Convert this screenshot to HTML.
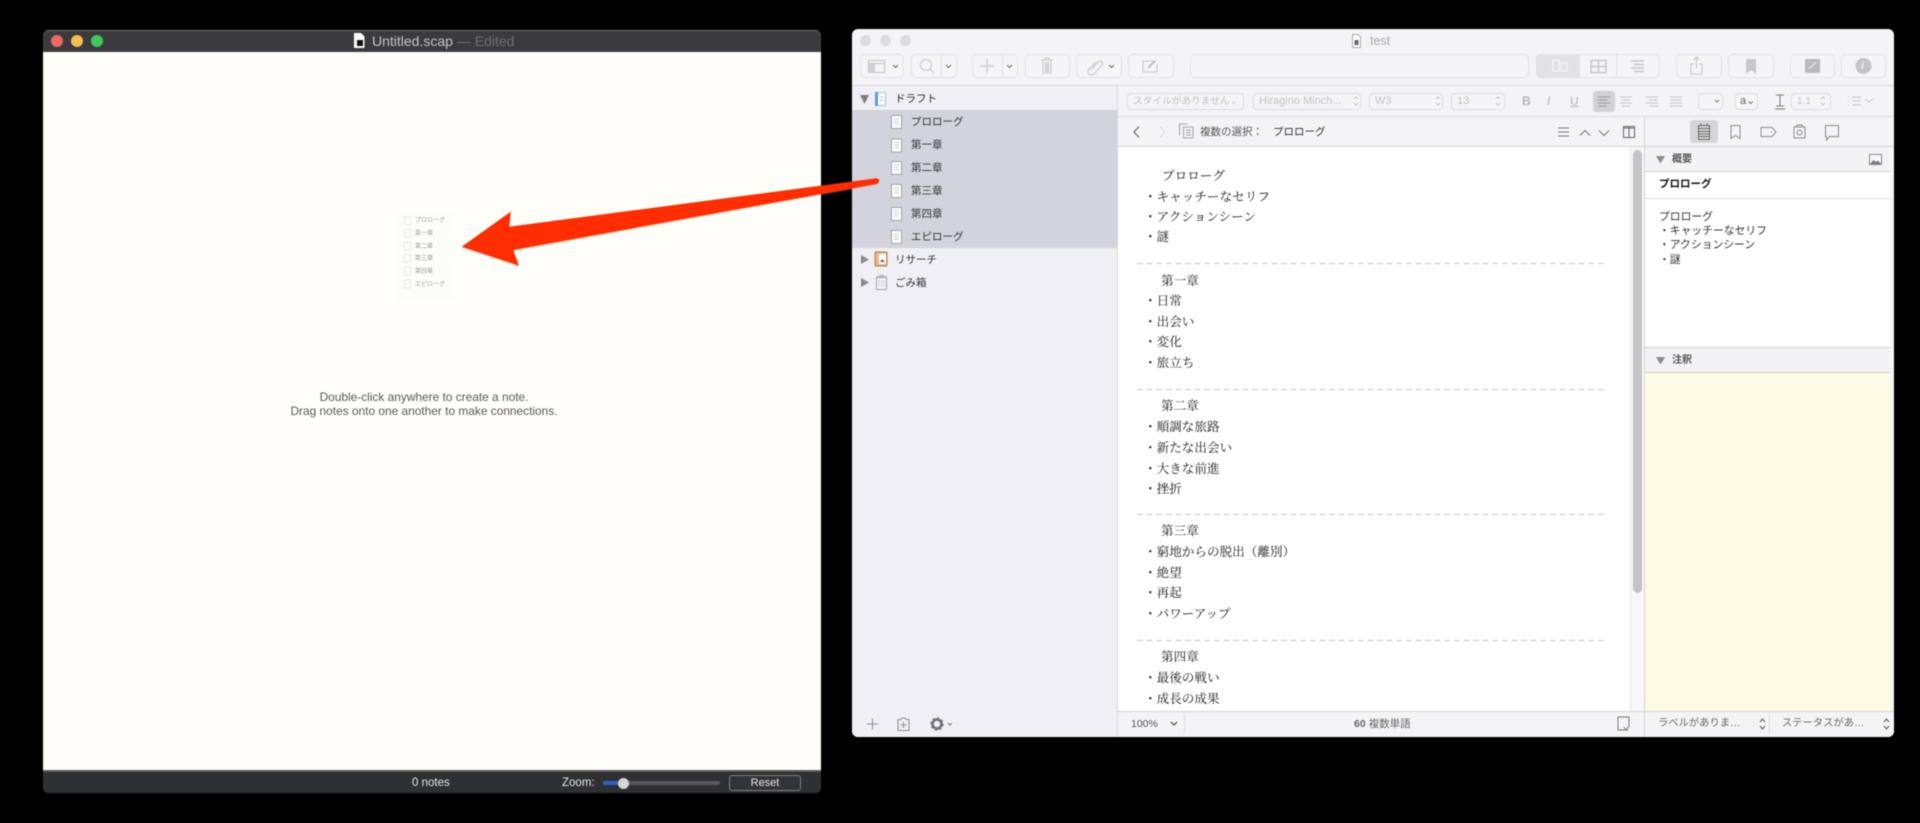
<!DOCTYPE html>
<html><head><meta charset="utf-8"><style>
html,body{margin:0;padding:0;background:#000;width:1920px;height:823px;overflow:hidden}
#w{position:absolute;left:0;top:0;width:1920px;height:823px;background:#000;filter:blur(.4px);overflow:hidden}
div,span{position:absolute;box-sizing:border-box}
.t{white-space:nowrap;height:20px;line-height:20px;font-family:"Liberation Sans","Noto Sans CJK JP",sans-serif;font-size:10.5px;color:#333}
.m{white-space:nowrap;height:20px;line-height:20px;font-family:"Liberation Serif","Noto Serif CJK SC",serif;font-size:12.6px;color:#1a1a1a}
.b{top:54px;height:24px;border:1px solid #e2e2e4;border-radius:5px;background:#f5f5f7}
.c{top:93px;height:17px;border:1px solid #dcdcde;border-radius:4px;background:#f5f5f7;font:10px/15px "Liberation Sans","Noto Sans CJK JP",sans-serif;color:#c2c2c4;padding-left:5px;white-space:nowrap;overflow:hidden}
.d{height:1px;background-image:repeating-linear-gradient(90deg,#c6c6c6 0 6px,transparent 6px 9.6px)}
svg{position:absolute;overflow:visible}
.g{fill:none;stroke:#c6c6c8;stroke-width:1.1}
</style></head><body><div id="w">

<!-- LEFT WINDOW -->
<div style="left:43px;top:30px;width:778px;height:763px;border-radius:5px;background:#2f3032;overflow:hidden">
  <div style="left:0;top:0;width:778px;height:22px;background:#3b3b3d;border-top:1px solid #707072"></div>
  <div style="left:0;top:22px;width:778px;height:718px;background:#fffef8"></div>
  <div style="left:0;top:740px;width:778px;height:2px;background:#5a5a5c"></div>
</div>
<div style="left:51px;top:35px;width:12px;height:12px;border-radius:50%;background:#ec6a5e"></div>
<div style="left:71px;top:35px;width:12px;height:12px;border-radius:50%;background:#f4bf4f"></div>
<div style="left:91px;top:35px;width:12px;height:12px;border-radius:50%;background:#3ec95a"></div>
<svg style="left:354px;top:33px" width="11" height="15"><path d="M0 0H7L10.500 3.500V15H0Z" fill="#fff"/><rect x="3" y="7" width="6" height="6" fill="#111"/></svg>
<div class="t" style="left:372px;top:31px;font-size:14px;color:#c4c4c6">Untitled.scap <span style="position:static;color:#717173">— Edited</span></div>

<div class="t" style="left:243px;top:387px;width:362px;text-align:center;font-size:11.9px;color:#58585a">Double-click anywhere to create a note.</div>
<div class="t" style="left:243px;top:401px;width:362px;text-align:center;font-size:11.9px;color:#58585a">Drag notes onto one another to make connections.</div>

<!-- mini list -->
<div style="left:396px;top:212px;width:58px;height:90px;background:#fdfdf8"></div>
<svg style="left:404px;top:216px" width="8" height="74"><g fill="#fbfbf7" stroke="#e2e2de" stroke-width=".7"><rect x=".5" y=".5" width="6" height="8"/><rect x=".5" y="13.200" width="6" height="8"/><rect x=".5" y="25.800" width="6" height="8"/><rect x=".5" y="38.500" width="6" height="8"/><rect x=".5" y="51.200" width="6" height="8"/><rect x=".5" y="63.800" width="6" height="8"/></g></svg>
<div class="t" style="left:415px;top:211px;font-size:6px;color:#9a9a98">プロローグ</div>
<div class="t" style="left:415px;top:224px;font-size:6px;color:#9a9a98">第一章</div>
<div class="t" style="left:415px;top:237px;font-size:6px;color:#9a9a98">第二章</div>
<div class="t" style="left:415px;top:249px;font-size:6px;color:#9a9a98">第三章</div>
<div class="t" style="left:415px;top:262px;font-size:6px;color:#9a9a98">第四章</div>
<div class="t" style="left:415px;top:275px;font-size:6px;color:#9a9a98">エピローグ</div>

<!-- left status -->
<div class="t" style="left:412px;top:773px;font-size:11.500px;color:#e6e6e6">0 notes</div>
<div class="t" style="left:562px;top:773px;font-size:11.500px;color:#e6e6e6">Zoom:</div>
<div style="left:603px;top:781px;width:117px;height:4px;border-radius:2px;background:#59595b"></div>
<div style="left:603px;top:781px;width:20px;height:4px;border-radius:2px;background:#2f62c4"></div>
<div style="left:618px;top:778px;width:11px;height:11px;border-radius:50%;background:#d6d6d8"></div>
<div style="left:729px;top:775px;width:72px;height:16px;border:1px solid #808082;border-radius:3px;background:#333436;color:#e6e6e6;font:11px/14px 'Liberation Sans',sans-serif;text-align:center">Reset</div>

<!-- RIGHT WINDOW -->
<div style="left:852px;top:29px;width:1042px;height:708px;border-radius:6px;background:#f4f4f6;overflow:hidden"></div>
<div style="left:860px;top:35px;width:11px;height:11px;border-radius:50%;background:#dcdcde"></div>
<div style="left:880px;top:35px;width:11px;height:11px;border-radius:50%;background:#dcdcde"></div>
<div style="left:900px;top:35px;width:11px;height:11px;border-radius:50%;background:#dcdcde"></div>
<svg style="left:1352px;top:34px" width="9" height="14"><path d="M.5.500H6L8.500 3V13.500H.5Z" fill="#fff" stroke="#aaa"/><rect x="2.500" y="6" width="4" height="5" fill="#666"/></svg>
<div class="t" style="left:1370px;top:31px;font-size:12.500px;color:#a8a8aa">test</div>

<!-- toolbar buttons -->
<div class="b" style="left:860px;width:44px"></div>
<div class="b" style="left:911px;width:46px"></div>
<div class="b" style="left:972px;width:46px"></div>
<div class="b" style="left:1025px;width:45px"></div>
<div class="b" style="left:1076px;width:46px"></div>
<div class="b" style="left:1128px;width:46px"></div>
<div class="b" style="left:1190px;width:339px;background:#f5f5f7"></div>
<div class="b" style="left:1536px;width:124px"></div>
<div style="left:1536px;top:54px;width:44px;height:24px;background:#e2e2e4;border-radius:5px 0 0 5px"></div>
<div style="left:1616px;top:54px;width:1px;height:24px;background:#dfdfe1"></div>
<div class="b" style="left:1676px;width:46px"></div>
<div class="b" style="left:1728px;width:46px"></div>
<div class="b" style="left:1790px;width:45px"></div>
<div class="b" style="left:1841px;width:45px"></div>
<div style="left:941px;top:55px;width:1px;height:22px;background:#dfdfe1"></div>
<div style="left:1002px;top:55px;width:1px;height:22px;background:#dfdfe1"></div>

<svg style="left:0;top:0" width="1920" height="823">
  <rect x="868.500" y="60.500" width="16" height="12" class="g"/><rect x="869" y="64" width="6" height="9" fill="#d0d0d2"/><path d="M869 63.500H884" class="g"/>
  <path d="M893 65l2.500 2.500 2.500-2.500" fill="none" stroke="#777" stroke-width="1.200"/>
  <circle cx="926" cy="65" r="5.500" class="g"/><path d="M930 69l4 4" class="g"/>
  <path d="M946 65l2.500 2.500 2.500-2.500" fill="none" stroke="#777" stroke-width="1.200"/>
  <path d="M980 66h14M987 59v14" fill="none" stroke="#cdcdcf" stroke-width="1.400"/>
  <path d="M1007 65l2.500 2.500 2.500-2.500" fill="none" stroke="#777" stroke-width="1.200"/>
  <path d="M1041 60h12M1045 60v-2h4v2M1043 61v12h8v-12M1045.500 62v10M1047 62v10M1048.500 62v10" class="g"/>
  <path d="M1091 70l7-8a2.500 2.500 0 0 1 4 3l-8 9a3.500 3.500 0 0 1-5-5l7-7" class="g"/>
  <path d="M1109 65l2.500 2.500 2.500-2.500" fill="none" stroke="#777" stroke-width="1.200"/>
  <path d="M1156 61h-13v11h14v-8" class="g"/><path d="M1148 68l7-7" fill="none" stroke="#b0b0b2" stroke-width="1.400"/>
  <path d="M1553 60h6v11h-6zM1561 63h6v8h-6z" fill="none" stroke="#f7f7f8" stroke-width="1.200"/>
  <path d="M1591 60.500h15v12h-15zM1598.500 60.500v12M1591 66.500h15" fill="none" stroke="#c6c6c8" stroke-width="1.400"/>
  <path d="M1631 61h13M1634 64.500h10M1631 68h13M1634 71.500h10" fill="none" stroke="#c6c6c8" stroke-width="1.400"/>
  <path d="M1694 64h-3v10h11v-10h-3M1696.500 68v-11M1693.500 60l3-3 3 3" class="g"/>
  <path d="M1746 59h10v15l-5-4-5 4z" fill="#c8c8ca"/>
  <rect x="1805" y="59" width="15" height="14" fill="#b9b9bb"/><path d="M1809 69l7-7" stroke="#eee" stroke-width="1.200"/>
  <circle cx="1863.500" cy="66" r="8" fill="#c4c4c6"/>
</svg>
<div class="t" style="left:1861px;top:56px;color:#f5f5f5;font-size:11px;font-style:italic;font-weight:bold">i</div>

<!-- format bar -->
<div style="left:852px;top:85px;width:1042px;height:1px;background:#dadadc"></div>
<div style="left:1118px;top:116px;width:776px;height:1px;background:#dadadc"></div>
<div class="c" style="left:1127px;width:117px;font-size:9.700px">スタイルがありません⌄</div>
<div class="c" style="left:1253px;width:108px;font-size:11px">Hiragino Minch...</div>
<div class="c" style="left:1369px;width:74px;font-size:11px">W3</div>
<div class="c" style="left:1451px;width:54px;font-size:11px">13</div>
<div class="t" style="left:1522px;top:91px;color:#b4b4b6;font-size:12px;font-weight:bold">B</div>
<div class="t" style="left:1547px;top:91px;color:#b4b4b6;font-size:12px;font-style:italic">I</div>
<div class="t" style="left:1570px;top:91px;color:#b4b4b6;font-size:12px;text-decoration:underline">U</div>
<div style="left:1593px;top:91px;width:22px;height:21px;border-radius:3px;background:#d2d2d4"></div>
<div class="c" style="left:1698px;width:25px"></div>
<div class="c" style="left:1735px;width:23px;color:#666;font-size:11px;padding-left:4px">a⌄</div>
<div class="c" style="left:1791px;width:40px">1.1</div>

<svg style="left:0;top:0" width="1920" height="823">
  <path d="M1598 97h12M1598 100h9M1598 103h12M1598 106h9" fill="none" stroke="#999"/>
  <path d="M1620 97h12M1622 100h8M1620 103h12M1622 106h8M1646 97h12M1649 100h9M1646 103h12M1649 106h9M1670 97h12M1670 100h12M1670 103h12M1670 106h12" fill="none" stroke="#c4c4c6"/>
  <path d="M1715 100l2 2 2-2" fill="none" stroke="#777"/>
  <path d="M1776 95h8M1780 95v11M1776 106h8M1775 109h10" fill="none" stroke="#777"/>
  <path d="M1354 99l2-2 2 2M1354 103l2 2 2-2M1436 99l2-2 2 2M1436 103l2 2 2-2M1496 99l2-2 2 2M1496 103l2 2 2-2M1821 99l2-2 2 2M1821 103l2 2 2-2" fill="none" stroke="#c4c4c6"/>
  <path d="M1848 97h1M1848 101h1M1848 105h1M1852 97h9M1852 101h9M1852 105h9M1865 99l4 3 4-3" fill="none" stroke="#c6c6c8"/>
</svg>

<!-- SIDEBAR -->
<div style="left:852px;top:86px;width:266px;height:651px;background:#efeff5;border-radius:0 0 0 6px"></div>
<div style="left:852px;top:110px;width:266px;height:138px;background:#d2d3dc"></div>
<div style="left:1117px;top:86px;width:1px;height:651px;background:#dadadc"></div>

<svg style="left:0;top:0" width="1920" height="823">
  <path d="M860 95h9l-4.500 9z" fill="#808082"/>
  <rect x="875.500" y="92.500" width="10" height="13" fill="#fff" stroke="#9cc0de"/><rect x="875" y="92" width="3" height="14" fill="#5f9ccf"/><path d="M880 97h3M880 100h3" stroke="#bbb"/>
  <g fill="#fff" stroke="#a2a2a6"><rect x="891.500" y="115.500" width="10" height="13"/><rect x="891.500" y="139" width="10" height="13"/><rect x="891.500" y="161.500" width="10" height="13"/><rect x="891.500" y="184.500" width="10" height="13"/><rect x="891.500" y="207.500" width="10" height="13"/><rect x="891.500" y="230.500" width="10" height="13"/></g>
  <path d="M894 119h5M894 121.500h5M894 124h5M894 142.500h5M894 145h5M894 147.500h5M894 165h5M894 167.500h5M894 170h5M894 188h5M894 190.500h5M894 193h5M894 211h5M894 213.500h5M894 216h5M894 234h5M894 236.500h5M894 239h5" stroke="#bbb" stroke-width=".8"/>
  <path d="M861 255v9l8-4.500zM861 278v9l8-4.500z" fill="#8a8a8c"/>
  <rect x="875" y="252" width="12" height="14" rx="1" fill="#e8b888" stroke="#b07a48"/><rect x="879" y="254" width="7" height="10" fill="#fff"/><path d="M880 262l2-3 3 3z" fill="#666"/>
  <rect x="876.500" y="277.500" width="10" height="12" rx="1" fill="#f6f6f8" stroke="#a0a0a4"/><path d="M876 277h11M879 275.500h5" stroke="#a0a0a4"/><path d="M879 280v7M881.500 280v7M884 280v7" stroke="#c4c4c6" stroke-width=".8"/>
  <path d="M867 724h11M872.500 718.500v11" stroke="#8e8e90" fill="none"/>
  <path d="M898 719.500h3l1-1.500h3l1 1.500h3v11h-11zM903.500 722v6M900.500 725h6" fill="none" stroke="#8e8e90"/>
  <circle cx="937" cy="724" r="4.500" fill="none" stroke="#707072" stroke-width="2.500"/><circle cx="937" cy="724" r="6" fill="none" stroke="#707072" stroke-width="1.500" stroke-dasharray="2 2.700"/>
  <path d="M948 723l2 2 2-2" fill="none" stroke="#707072"/>
</svg>
<div class="t" style="left:895px;top:89px;color:#2a2a2c">ドラフト</div>
<div class="t" style="left:911px;top:112px">プロローグ</div>
<div class="t" style="left:911px;top:135px">第一章</div>
<div class="t" style="left:911px;top:158px">第二章</div>
<div class="t" style="left:911px;top:181px">第三章</div>
<div class="t" style="left:911px;top:204px">第四章</div>
<div class="t" style="left:911px;top:227px">エピローグ</div>
<div class="t" style="left:895px;top:250px">リサーチ</div>
<div class="t" style="left:895px;top:273px">ごみ箱</div>

<!-- NAV -->
<div style="left:1118px;top:146px;width:776px;height:1px;background:#d4d4d6"></div>
<svg style="left:0;top:0" width="1920" height="823">
  <path d="M1139 126.500l-5 5.500 5 5.500" fill="none" stroke="#666" stroke-width="1.200"/>
  <path d="M1160 126.500l5 5.500-5 5.500" fill="none" stroke="#dcdcde" stroke-width="1.200"/>
  <path d="M1179.500 135.500v-11.500h8M1183.500 127h9.500v11h-9.500zM1186 130h5M1186 132.500h5M1186 135h5" fill="none" stroke="#a6a6a8"/>
  <path d="M1558 128h11M1558 132h11M1558 136h11" stroke="#777" fill="none"/>
  <path d="M1580 135.500l5-5 5 5M1599 130.500l5 5 5-5" stroke="#777" stroke-width="1.100" fill="none"/>
  <path d="M1623.500 126.500h11v11h-11zM1629 126.500v11M1623.500 128h11" stroke="#666" fill="none"/>
</svg>
<div class="t" style="left:1200px;top:122px;color:#555">複数の選択：</div>
<div class="t" style="left:1273px;top:122px;color:#333">プロローグ</div>

<!-- EDITOR -->
<div style="left:1118px;top:147px;width:512px;height:564px;background:#fff;overflow:hidden">
  <div class="m" style="left:44px;top:19px">プロローグ</div>
  <div class="m" style="left:26px;top:40px">・キャッチーなセリフ</div>
  <div class="m" style="left:26px;top:60px">・アクションシーン</div>
  <div class="m" style="left:26px;top:80px">・謎</div>
  <div class="d" style="left:19px;top:116px;width:470px"></div>
  <div class="m" style="left:43px;top:124px">第一章</div>
  <div class="m" style="left:26px;top:144px">・日常</div>
  <div class="m" style="left:26px;top:165px">・出会い</div>
  <div class="m" style="left:26px;top:185px">・変化</div>
  <div class="m" style="left:26px;top:206px">・旅立ち</div>
  <div class="d" style="left:19px;top:242px;width:470px"></div>
  <div class="m" style="left:43px;top:249px">第二章</div>
  <div class="m" style="left:26px;top:270px">・順調な旅路</div>
  <div class="m" style="left:26px;top:291px">・新たな出会い</div>
  <div class="m" style="left:26px;top:312px">・大きな前進</div>
  <div class="m" style="left:26px;top:332px">・挫折</div>
  <div class="d" style="left:19px;top:367px;width:470px"></div>
  <div class="m" style="left:43px;top:374px">第三章</div>
  <div class="m" style="left:26px;top:395px">・窮地からの脱出（離別）</div>
  <div class="m" style="left:26px;top:416px">・絶望</div>
  <div class="m" style="left:26px;top:436px">・再起</div>
  <div class="m" style="left:26px;top:457px">・パワーアップ</div>
  <div class="d" style="left:19px;top:493px;width:470px"></div>
  <div class="m" style="left:43px;top:500px">第四章</div>
  <div class="m" style="left:26px;top:521px">・最後の戦い</div>
  <div class="m" style="left:26px;top:542px">・成長の成果</div>
</div>
<!-- scrollbar -->
<div style="left:1630px;top:147px;width:14px;height:564px;background:#f8f8f9;border-left:1px solid #e4e4e6"></div>
<div style="left:1633px;top:150px;width:9px;height:443px;border-radius:5px;background:#c3c3c5"></div>

<!-- INSPECTOR -->
<div style="left:1644px;top:117px;width:1px;height:620px;background:#d4d4d6"></div>
<div style="left:1690px;top:120px;width:28px;height:23px;border-radius:3px;background:#d6d6d8"></div>
<svg style="left:0;top:0" width="1920" height="823">
  <path d="M1698.500 125.500h11v14h-11zM1698.500 128.500h11M1698.500 131.500h11M1698.500 134h11M1698.500 136.500h11M1701 123.500v2M1707 123.500v2" fill="none" stroke="#666"/>
  <path d="M1731 125.500h9v13l-4.500-3-4.500 3z" fill="none" stroke="#8a8a8c"/>
  <path d="M1761 127.500h11l4 4.500-4 4.500h-11zM1771 132h1" fill="none" stroke="#8a8a8c"/>
  <rect x="1794" y="127" width="11" height="11" fill="none" stroke="#8a8a8c"/><circle cx="1799.500" cy="132.500" r="2.500" fill="none" stroke="#8a8a8c"/><path d="M1796 127l1-2h5l1 2" fill="none" stroke="#8a8a8c"/>
  <path d="M1825.500 125.500h13v11h-9l-3 3.500v-3.500h-1z" fill="none" stroke="#8a8a8c"/>
</svg>
<div style="left:1645px;top:147px;width:245px;height:25px;background:#f3f3f5;border-bottom:1px solid #d0d0d2"></div>
<svg style="left:0;top:0" width="1920" height="823">
  <path d="M1656 156h9l-4.500 7.500z" fill="#8a8a8c"/>
  <rect x="1869.500" y="154.500" width="12" height="10" fill="#f8f8f8" stroke="#8a8a8c"/><path d="M1870 164l3.500-4 2.500 2 2-1.500 3 3.500z" fill="#777"/>
</svg>
<div class="t" style="left:1672px;top:150px;color:#555;font-weight:bold;font-size:10px">概要</div>
<div style="left:1645px;top:172px;width:245px;height:175px;background:#fff"></div>
<div style="left:1645px;top:198px;width:245px;height:1px;background:#dcdcde"></div>
<div class="t" style="left:1659px;top:174px;font-weight:bold;color:#111">プロローグ</div>
<div class="t" style="left:1659px;top:207px;font-size:10.800px;color:#333">プロローグ</div>
<div class="t" style="left:1659px;top:221px;font-size:10.800px;color:#333">・キャッチーなセリフ</div>
<div class="t" style="left:1659px;top:235px;font-size:10.800px;color:#333">・アクションシーン</div>
<div class="t" style="left:1659px;top:250px;font-size:10.800px;color:#333">・謎</div>
<div style="left:1645px;top:347px;width:245px;height:26px;background:#f3f3f5;border-top:1px solid #d0d0d2;border-bottom:1px solid #d0d0d2"></div>
<svg style="left:0;top:0" width="1920" height="823"><path d="M1656 357h9l-4.500 7.500z" fill="#8a8a8c"/></svg>
<div class="t" style="left:1672px;top:351px;color:#555;font-weight:bold;font-size:10px">注釈</div>
<div style="left:1645px;top:373px;width:245px;height:338px;background:#fdfbe3"></div>

<!-- bottom bar -->
<div style="left:1118px;top:711px;width:776px;height:1px;background:#d4d4d6"></div>
<div style="left:1118px;top:712px;width:776px;height:25px;background:#f4f4f6;border-radius:0 0 6px 0"></div>
<div class="t" style="left:1131px;top:714px;color:#555">100%</div>
<div style="left:1184px;top:713px;width:1px;height:22px;background:#dcdcde"></div>
<div style="left:1644px;top:712px;width:1px;height:25px;background:#d4d4d6"></div>
<div style="left:1769px;top:713px;width:1px;height:22px;background:#dcdcde"></div>
<div class="t" style="left:1354px;top:714px;color:#666"><b>60</b> 複数単語</div>
<div class="t" style="left:1658px;top:714px;color:#666;font-size:10.300px">ラベルがありま…</div>
<div class="t" style="left:1782px;top:714px;color:#666;font-size:10.300px">ステータスがあ…</div>
<svg style="left:0;top:0" width="1920" height="823">
  <path d="M1171 722l3 3 3-3" fill="none" stroke="#555" stroke-width="1.300"/>
  <path d="M1628 730h-10v-13h11v10M1624 727l2 3 3-4" fill="none" stroke="#777"/>
  <path d="M1760 722l2.500-3 2.500 3M1760 726l2.500 3 2.500-3M1884 722l2.500-3 2.500 3M1884 726l2.500 3 2.500-3" fill="none" stroke="#555"/>
</svg>

<!-- ARROW -->
<svg style="left:0;top:0" width="1920" height="823">
  <path d="M462 248L511 213L510 228L877 179.500Q880 181 877 185L513 251.500L519 267Z" fill="#c8a080" opacity=".35"/>
  <path d="M461.700 246.700L510.700 211.700L509.300 226.700L876.700 178.300Q880 179.500 879 181.500Q878.500 183.500 876.700 184L513.300 250L519 265.700Z" fill="#ff2d00"/>
</svg>
</div></body></html>
